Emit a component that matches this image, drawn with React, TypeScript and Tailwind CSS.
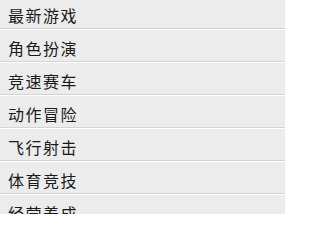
const CATEGORIES = ['最新游戏', '角色扮演', '竞速赛车', '动作冒险', '飞行射击', '体育竞技', '经营养成'];

export default function App() {
  return (
    <div className="h-[214px] w-[285px] overflow-hidden bg-[#ececec]">
      <ul className="-mt-[4px]">
        {CATEGORIES.map((name, i) => (
          <li
            key={name}
            className={`flex h-[33px] items-center pl-[8px] pt-[4px] border-b border-b-[#d3d3d3] ${i > 0 ? 'border-t border-t-white' : 'border-t border-t-[#ececec]'}`}
          >
            <span className="text-[16px] leading-none tracking-[1.5px] text-[#1a1a1a] font-['Noto_Sans_CJK_SC',sans-serif]">
              {name}
            </span>
          </li>
        ))}
      </ul>
    </div>
  );
}
